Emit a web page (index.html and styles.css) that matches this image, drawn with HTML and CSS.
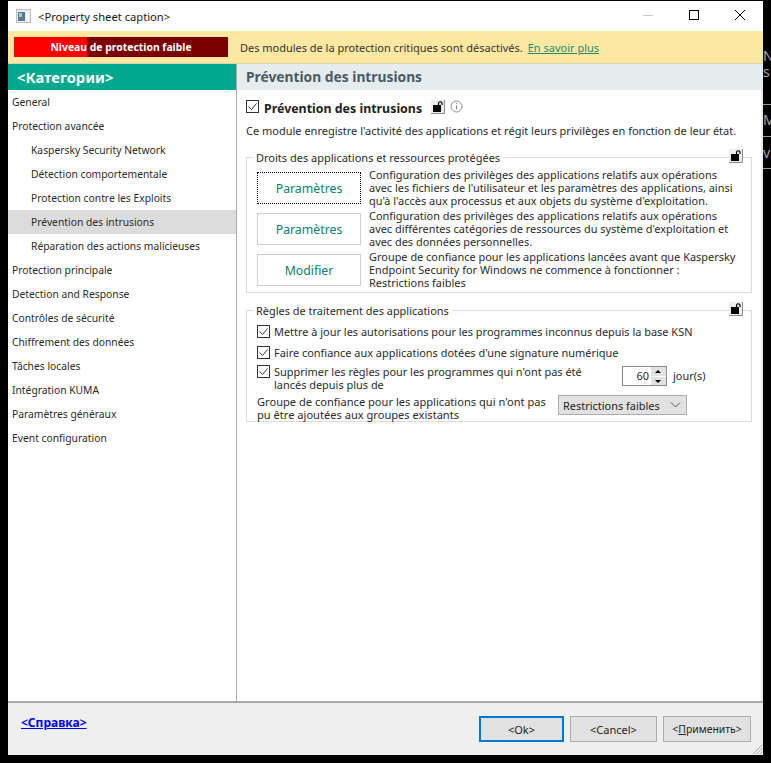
FILE: index.html
```html
<!DOCTYPE html>
<html lang="fr">
<head>
<meta charset="utf-8">
<title>Property sheet</title>
<link rel="stylesheet" href="styles.css">
</head>
<body>
<div class="backdrop">
  <span class="bd bd-n">N</span><span class="bd bd-s">s</span><span class="bd bd-ma">Ma</span><span class="bd bd-vi">vi</span>
  <i class="bl bl-1"></i><i class="bl bl-2"></i><i class="bl bl-3"></i>
</div>
<div class="window">
  <header class="titlebar">
    <svg class="appicon" width="15" height="14" viewBox="0 0 15 14"><rect width="15" height="14" fill="#bdbdbd"/><rect x="1" y="1" width="13" height="12" fill="#ececec"/><rect x="2" y="3" width="7" height="9" fill="#4f7f8e"/><rect x="3" y="4" width="3" height="4" fill="#a9c8c8"/><rect x="10" y="3" width="3" height="9" fill="#fafafa"/></svg>
    <span class="caption">&lt;Property sheet caption&gt;</span>
    <div class="winbtns">
      <svg width="46" height="30" viewBox="0 0 46 30"><path d="M18 14.500h10" stroke="#c8c8c8"/></svg>
      <svg width="46" height="30" viewBox="0 0 46 30"><rect x="18.500" y="9.500" width="9" height="9" fill="none" stroke="#000"/></svg>
      <svg width="46" height="30" viewBox="0 0 46 30"><path d="M18 9l10 10M28 9l-10 10" stroke="#000" fill="none"/></svg>
    </div>
  </header>

  <div class="banner">
    <div class="level"><span class="level-fill"></span><span class="level-text">Niveau de protection faible</span></div>
    <span class="banner-msg">Des modules de la protection critiques sont désactivés.</span>
    <a class="banner-link">En savoir plus</a>
  </div>

  <div class="main">
    <nav class="sidebar">
      <div class="cat-head">&lt;Категории&gt;</div>
      <ul class="nav">
        <li>General</li>
        <li>Protection avancée</li>
        <li class="sub">Kaspersky Security Network</li>
        <li class="sub">Détection comportementale</li>
        <li class="sub">Protection contre les Exploits</li>
        <li class="sub active">Prévention des intrusions</li>
        <li class="sub">Réparation des actions malicieuses</li>
        <li>Protection principale</li>
        <li>Detection and Response</li>
        <li>Contrôles de sécurité</li>
        <li>Chiffrement des données</li>
        <li>Tâches locales</li>
        <li>Intégration KUMA</li>
        <li>Paramètres généraux</li>
        <li>Event configuration</li>
      </ul>
    </nav>

    <section class="content">
      <h1 class="content-head">Prévention des intrusions</h1>
      <div class="panel">
        <div class="module-row">
          <span class="check"><svg width="13" height="13" viewBox="0 0 13 13"><path d="M2.500 6.500l3 3 5-6" fill="none" stroke="#333"/></svg></span>
          <strong class="module-title">Prévention des intrusions</strong>
          <svg class="lock lock-inline" width="14" height="14" viewBox="0 0 14 14"><use href="#lock"/></svg>
          <svg class="info" width="13" height="13" viewBox="0 0 13 13"><circle cx="6.500" cy="6.500" r="5.500" fill="none" stroke="#8a8a8a"/><path d="M6.500 3v1.200M6.500 5.500v4" stroke="#8a8a8a"/></svg>
        </div>
        <p class="module-desc">Ce module enregistre l'activité des applications et régit leurs privilèges en fonction de leur état.</p>

        <fieldset class="group group-rights">
          <legend>Droits des applications et ressources protégées</legend>
          <svg class="lock lock-corner" width="14" height="14" viewBox="0 0 14 14"><use href="#lock"/></svg>
          <div class="action">
            <button class="btn btn-focus">Paramètres</button>
            <p>Configuration des privilèges des applications relatifs aux opérations avec les fichiers de l'utilisateur et les paramètres des applications, ainsi qu'à l'accès aux processus et aux objets du système d'exploitation.</p>
          </div>
          <div class="action">
            <button class="btn">Paramètres</button>
            <p>Configuration des privilèges des applications relatifs aux opérations avec différentes catégories de ressources du système d'exploitation et avec des données personnelles.</p>
          </div>
          <div class="action">
            <button class="btn">Modifier</button>
            <p>Groupe de confiance pour les applications lancées avant que Kaspersky Endpoint Security for Windows ne commence à fonctionner :<br>Restrictions faibles</p>
          </div>
        </fieldset>

        <fieldset class="group group-rules">
          <legend>Règles de traitement des applications</legend>
          <svg class="lock lock-corner" width="14" height="14" viewBox="0 0 14 14"><use href="#lock"/></svg>
          <label class="opt"><span class="check"><svg width="13" height="13" viewBox="0 0 13 13"><path d="M2.500 6.500l3 3 5-6" fill="none" stroke="#333"/></svg></span>Mettre à jour les autorisations pour les programmes inconnus depuis la base KSN</label>
          <label class="opt"><span class="check"><svg width="13" height="13" viewBox="0 0 13 13"><path d="M2.500 6.500l3 3 5-6" fill="none" stroke="#333"/></svg></span>Faire confiance aux applications dotées d'une signature numérique</label>
          <div class="opt-days">
            <label class="opt opt-wrap"><span class="check"><svg width="13" height="13" viewBox="0 0 13 13"><path d="M2.500 6.500l3 3 5-6" fill="none" stroke="#333"/></svg></span><span>Supprimer les règles pour les programmes qui n'ont pas été lancés depuis plus de</span></label>
            <span class="spin"><span class="spin-val">60</span><span class="spin-btns"><i class="up"></i><i class="down"></i></span></span>
            <span class="days">jour(s)</span>
          </div>
          <div class="trust-row">
            <span class="trust-label">Groupe de confiance pour les applications qui n'ont pas pu être ajoutées aux groupes existants</span>
            <span class="select">Restrictions faibles<svg width="11" height="6" viewBox="0 0 11 6"><path d="M1 .5l4.500 4.500L10 .5" fill="none" stroke="#555"/></svg></span>
          </div>
        </fieldset>
      </div>
    </section>
  </div>

  <footer class="footer">
    <a class="help">&lt;Справка&gt;</a>
    <div class="foot-btns">
      <button class="fbtn fbtn-default">&lt;Ok&gt;</button>
      <button class="fbtn fbtn-cancel">&lt;Cancel&gt;</button>
      <button class="fbtn fbtn-apply">&lt;<u>П</u>рименить&gt;</button>
    </div>
    <svg class="grip" width="12" height="12" viewBox="0 0 12 12"><path d="M11.500 1.500l-10 10M11.500 5l-6.500 6.500M11.500 8.500l-3 3" stroke="#a8a8a8" fill="none"/></svg>
  </footer>
</div>
<svg width="0" height="0" class="defs"><defs><symbol id="lock" viewBox="0 0 14 14"><rect x="0" y="0" width="14" height="14" fill="#ececec"/><path d="M13.500 0v13.500H0" fill="none" stroke="#8c8c8c"/><rect x="2" y="5" width="8" height="7" fill="#000"/><path d="M7.500 5V3.500a1.750 1.750 0 0 1 3.500 0V5" fill="none" stroke="#000" stroke-width="1.200"/></symbol></defs></svg>
</body>
</html>
```

FILE: styles.css
```css
* { box-sizing: border-box; }
html, body { margin: 0; height: 100%; }
body {
  background: #000;
  font-family: "Noto Sans", "Open Sans", sans-serif;
  font-size: 11px;
  color: #2b2b2b;
  overflow: hidden;
  position: relative;
}
.defs { position: absolute; }
.backdrop { position: absolute; inset: 0; }
.bd { position: absolute; left: 763px; color: #a8a8a8; font-size: 14px; line-height: 14px; }
.bd-n { top: 49px; }
.bd-s { top: 65px; }
.bd-ma { top: 113px; }
.bd-vi { top: 146px; }
.bl { position: absolute; left: 763px; width: 8px; height: 1px; background: #9a9a9a; }
.bl-1 { top: 104px; }
.bl-2 { top: 136px; }
.bl-3 { top: 168px; }

.window {
  position: absolute;
  left: 8px;
  top: 1px;
  width: 755px;
  height: 754px;
  background: #fff;
  display: flex;
  flex-direction: column;
}
.titlebar {
  height: 30px;
  display: flex;
  align-items: center;
  padding-left: 8px;
  flex: none;
}
.appicon { margin-right: 7px; }
.caption { font-size: 11.200px; color: #1a1a1a; }
.winbtns { margin-left: auto; display: flex; }

.banner {
  height: 33px;
  flex: none;
  background: #fde8a1;
  border-bottom: 1px solid #d8d2b4;
  display: flex;
  align-items: center;
  padding-left: 6px;
}
.level {
  position: relative;
  width: 214px;
  height: 20px;
  background: #7c0000;
  color: #fff;
  font-weight: 700;
  font-size: 10.400px;
  text-align: center;
  line-height: 20px;
  margin-right: 12px;
}
.level-fill { position: absolute; left: 0; top: 0; bottom: 0; width: 73px; background: #f00; }
.level-text { position: relative; }
.banner-msg { margin-right: 5px; color: #333; font-size: 10.980px; }
.banner-link { color: #1f8a70; text-decoration: underline; }

.main { flex: 1; display: flex; min-height: 0; }
.sidebar { width: 229px; flex: none; border-right: 1px solid #a9a9a9; }
.cat-head {
  height: 26px;
  background: #00a88e;
  color: #fff;
  font-size: 14.700px;
  font-weight: 700;
  line-height: 26px;
  padding-left: 9px;
}
.nav { list-style: none; margin: 0; padding: 0; font-size: 10.300px; }
.nav li { height: 24px; line-height: 24px; padding-left: 4px; white-space: nowrap; }
.nav li.sub { padding-left: 23px; }
.nav li.active { background: #dcdcdc; }

.content { flex: 1; min-width: 0; display: flex; flex-direction: column; background: #e6ebee; }
.content-head {
  margin: 0;
  height: 26px;
  line-height: 26px;
  font-size: 13.800px;
  font-weight: 700;
  color: #4a5a63;
  padding-left: 9px;
  flex: none;
}
.panel { flex: 1; background: #fff; margin-right: 2px; padding: 8px 9px 0; }

.module-row { display: flex; align-items: center; height: 20px; }
.module-row .check { margin-bottom: 3px; }
.check {
  width: 13px; height: 13px;
  border: 1px solid #333;
  background: #fff;
  display: inline-flex;
  flex: none;
  position: relative;
}
.check svg { position: absolute; left: -1px; top: -1px; }
.module-title { font-size: 12.400px; color: #222; margin-left: 5px; }
.lock { display: block; flex: none; }
.lock-inline { margin: 0 0 3px 9px; }
.info { margin: 0 0 4px 5px; }
.module-desc { margin: 5px 0 0; line-height: 15px; white-space: nowrap; }

.group {
  position: relative;
  margin: 0;
  border: 1px solid #dcdcdc;
  min-width: 0;
}
.group legend { margin-left: -4px; padding: 0 3px; line-height: 13px; }
.group-rights { margin-top: 13px; height: 142px; padding: 3px 6px 0 10px; }
.group-rules { margin-top: 11px; height: 118px; padding: 4px 6px 0 10px; font-size: 10.950px; }
.lock-corner { position: absolute; right: 8px; top: -15px; }

.action { display: flex; height: 41px; align-items: center; }
.btn {
  width: 104px;
  height: 32px;
  flex: none;
  background: #fff;
  border: 1px solid #cfcfcf;
  color: #0b7f70;
  font: inherit;
  font-size: 12.300px;
  padding: 2px 0 0;
  margin-right: 8px;
}
.btn-focus { border: 1px dotted #000; }
.action p { margin: 0; width: 372px; line-height: 13px; font-size: 10.950px; }

.opt { display: flex; align-items: center; height: 21px; white-space: nowrap; }
.opt .check { margin-right: 4px; }
.opt-days { display: flex; align-items: flex-start; height: 30px; margin-top: 2px; }
.opt-wrap { width: 330px; white-space: normal; align-items: flex-start; height: auto; line-height: 13px; }
.spin {
  width: 45px; height: 20px;
  border: 1px solid #8a8a8a;
  display: flex;
  margin: 1px 0 0 35px;
  background: #fff;
}
.spin-val { flex: 1; text-align: right; line-height: 18px; padding-right: 2px; }
.spin-btns { width: 15px; display: flex; flex-direction: column; gap: 1px; }
.spin-btns i { flex: 1; background: #e2e2e2; position: relative; display: block; }
.spin-btns i::after {
  content: ""; position: absolute; left: 4px; width: 0; height: 0;
  border-left: 3px solid transparent; border-right: 3px solid transparent;
}
.spin-btns .up::after { top: 3px; border-bottom: 3px solid #000; }
.spin-btns .down::after { top: 3px; border-top: 3px solid #000; }
.days { margin: 3px 0 0 6px; }
.trust-row { display: flex; align-items: flex-start; }
.trust-label { width: 301px; line-height: 13px; font-size: 11.100px; }
.select {
  width: 129px; height: 20px;
  background: #e1e1e1;
  border: 1px solid #adadad;
  display: flex; align-items: center; justify-content: space-between;
  padding: 0 5px 0 4px;
  color: #222;
}

.footer {
  height: 54px;
  flex: none;
  background: #efefef;
  border-top: 2px solid #a9a9a9;
  position: relative;
  display: flex;
  align-items: flex-start;
  padding: 13px 12px 0 13px;
}
.help { color: #00f; font-weight: 700; font-size: 12px; text-decoration: underline; line-height: 14px; }
.foot-btns { margin-left: auto; display: flex; gap: 6px; }
.fbtn {
  height: 26px;
  background: #e1e1e1;
  border: 1px solid #adadad;
  font: inherit;
  font-size: 11px;
  color: #222;
  padding: 0;
}
.fbtn-default { width: 85px; border: 2px solid #0078d7; }
.fbtn-cancel { width: 87px; }
.fbtn-apply { width: 88px; font-size: 10.400px; }
.grip { position: absolute; right: 0; bottom: 0; }
```
